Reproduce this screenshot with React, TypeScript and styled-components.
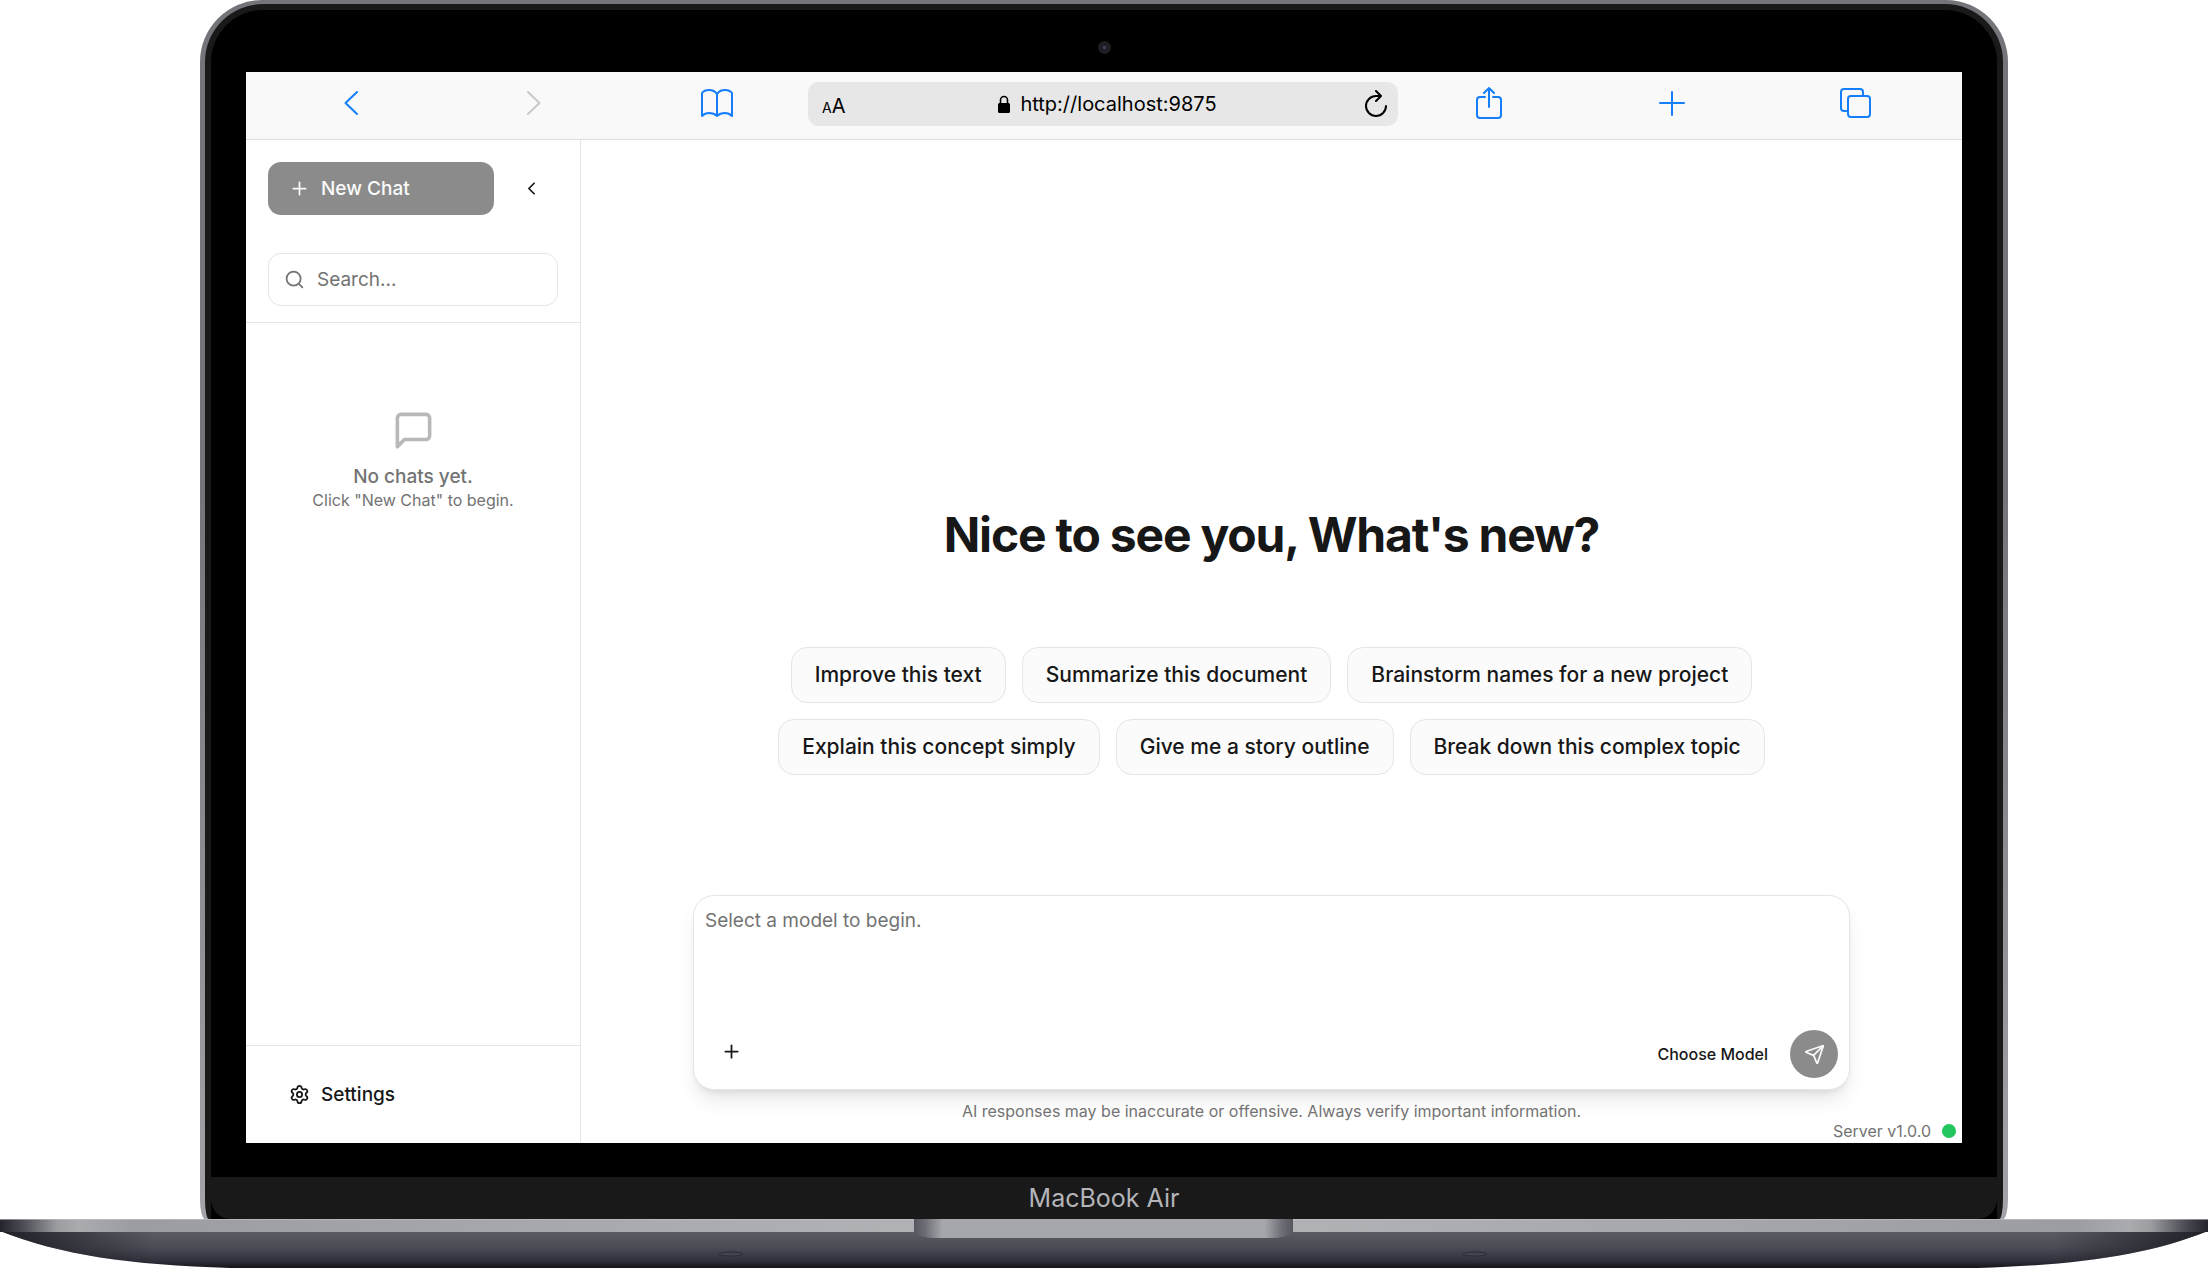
import React, { useState } from "react";
import styled, { createGlobalStyle } from "styled-components";
import { Plus, ChevronLeft, Search, Settings, Send } from "lucide-react";

const GlobalStyle = createGlobalStyle`
  *, *::before, *::after { box-sizing: border-box; }
  body {
    margin: 0;
    background: #fff;
    color: #171717;
    font-family: Inter, "Liberation Sans", sans-serif;
    -webkit-font-smoothing: antialiased;
  }
  button, input, textarea { font: inherit; color: inherit; }
  button { cursor: pointer; }
`;

const colors = {
  line: "#e5e5e5",
  muted: "#737373",
  ink: "#171717",
  disabled: "#8b8b8b",
  link: "#147efb",
};

/* ---------- Laptop ---------- */

const Laptop = styled.div`
  display: flex;
  flex-direction: column;
  min-height: 100vh;
`;

const Lid = styled.div`
  flex: 1;
  display: flex;
  margin: 0 200px;
  padding: 4px 5px 0;
  border-radius: 62px 62px 5px 5px / 62px 62px 20px 20px;
  background: linear-gradient(#74757b, #74757b 40%, #a3a4a9);
`;

const Bezel = styled.div`
  flex: 1;
  min-width: 0;
  display: flex;
  flex-direction: column;
  border: 6px solid #191919;
  border-bottom: 0;
  border-radius: 58px 58px 4px 4px / 58px 58px 20px 20px;
  background: #000;
`;

const CameraBar = styled.div`
  display: flex;
  align-items: center;
  justify-content: center;
  height: 62px;
  padding-top: 12px;
`;

const Camera = styled.span`
  width: 13px;
  height: 13px;
  border-radius: 50%;
  background: radial-gradient(circle, #3c3c50 0 1px, #15151c 3px, #222224 4px, #1c1c1e 6px);
`;

const Chin = styled.div`
  display: flex;
  align-items: center;
  justify-content: center;
  height: 42px;
  margin-top: 34px;
  border-radius: 0 0 20px 20px;
  background: #191919;
  color: #b4b4b9;
  font-size: 25px;
  line-height: 32px;
`;

const BaseDrawing = styled.svg`
  display: block;
  width: 100%;
  height: 49px;
`;

/* ---------- Browser ---------- */

const Screen = styled.div`
  position: relative;
  flex: 1;
  display: flex;
  flex-direction: column;
  margin: 0 35px;
  background: #fff;
`;

const BrowserBar = styled.nav`
  display: grid;
  grid-template-columns: repeat(3, 1fr) 35% repeat(3, 1fr);
  align-items: center;
  height: 68px;
  padding: 0 16px 6px 14px;
  border-bottom: 1px solid #dcdcdc;
  background: #f9f9f9;
`;

const BarButton = styled.button<{ $dim?: boolean }>`
  display: flex;
  align-items: center;
  justify-content: center;
  height: 44px;
  padding: 0;
  border: 0;
  background: none;
  color: ${(p) => (p.$dim ? "#c8c8c8" : colors.link)};
`;

const AddressBar = styled.div`
  display: grid;
  grid-template-columns: 1fr auto 1fr;
  align-items: center;
  height: 44px;
  margin-top: 3px;
  padding: 0 10px 0 14px;
  border-radius: 11px;
  background: #e7e7e7;
  color: #000;
`;

const TextSize = styled.button`
  justify-self: start;
  padding: 5px 0 0;
  border: 0;
  background: none;
  font-size: 20px;
  line-height: 24px;
  small { font-size: 14px; }
`;

const Address = styled.span`
  display: flex;
  align-items: center;
  gap: 9px;
  padding-left: 4px;
  font-size: 20px;
  line-height: 24px;
`;

const Reload = styled.button`
  display: flex;
  justify-self: end;
  padding: 0;
  border: 0;
  background: none;
`;

/* ---------- Sidebar ---------- */

const AppShell = styled.div`
  flex: 1;
  display: flex;
`;

const Sidebar = styled.aside`
  display: flex;
  flex-direction: column;
  width: 335px;
  border-right: 1px solid ${colors.line};
`;

const SidebarHead = styled.div`
  display: flex;
  flex-direction: column;
  gap: 38px;
  padding: 22px 22px 16px;
  border-bottom: 1px solid ${colors.line};
`;

const HeadRow = styled.div`
  display: flex;
  gap: 11px;
`;

const NavButton = styled.button<{ $filled?: boolean }>`
  flex: 1;
  display: flex;
  align-items: center;
  gap: 11px;
  height: 53px;
  padding: 0 21px;
  border: 0;
  border-radius: 13px;
  background: ${(p) => (p.$filled ? colors.disabled : "transparent")};
  color: ${(p) => (p.$filled ? "#fafafa" : colors.ink)};
  font-size: 19px;
  font-weight: 500;
  line-height: 28px;
`;

const IconButton = styled.button`
  display: flex;
  align-items: center;
  justify-content: center;
  width: 53px;
  height: 53px;
  padding: 0;
  border: 0;
  background: none;
  color: ${colors.ink};
`;

const SearchField = styled.label`
  display: flex;
  align-items: center;
  gap: 12px;
  height: 53px;
  padding: 0 15px;
  border: 1px solid ${colors.line};
  border-radius: 13px;
  color: ${colors.muted};
`;

const SearchInput = styled.input`
  flex: 1;
  min-width: 0;
  padding: 0;
  border: 0;
  outline: 0;
  background: none;
  font-size: 19px;
  line-height: 28px;
  &::placeholder { color: ${colors.muted}; opacity: 1; }
`;

const EmptyState = styled.div`
  flex: 1;
  display: flex;
  flex-direction: column;
  align-items: center;
  padding-top: 86px;
  color: ${colors.muted};
  text-align: center;
  svg { margin-bottom: 11px; opacity: 0.5; }
`;

const EmptyTitle = styled.p`
  margin: 0;
  font-size: 19px;
  font-weight: 500;
  line-height: 27px;
`;

const Note = styled.p`
  margin: 0;
  color: ${colors.muted};
  font-size: 16px;
  line-height: 21px;
  text-align: center;
`;

const SidebarFoot = styled.div`
  display: flex;
  padding: 22px;
  border-top: 1px solid ${colors.line};
`;

/* ---------- Conversation ---------- */

const Main = styled.main`
  flex: 1;
  min-width: 0;
  display: flex;
  flex-direction: column;
  align-items: center;
  padding: 0 21px 21px;
`;

const Hero = styled.section`
  flex: 1;
  display: flex;
  flex-direction: column;
  align-items: center;
  justify-content: flex-end;
  gap: 80px;
  padding-bottom: 120px;
`;

const Greeting = styled.h1`
  margin: 0;
  font-size: 48px;
  font-weight: 700;
  letter-spacing: -0.025em;
  line-height: 64px;
`;

const Suggestions = styled.div`
  display: flex;
  flex-wrap: wrap;
  justify-content: center;
  gap: 16px;
  max-width: 1024px;
`;

const Suggestion = styled.button`
  height: 56px;
  padding: 0 23px;
  border: 1px solid ${colors.line};
  border-radius: 16px;
  background: #fbfbfb;
  font-size: 21px;
  font-weight: 500;
  line-height: 32px;
`;

const Composer = styled.form`
  display: flex;
  flex-direction: column;
  width: 100%;
  max-width: 1157px;
  margin-bottom: 11px;
  padding: 11px;
  border: 1px solid ${colors.line};
  border-radius: 21px;
  background: #fff;
  box-shadow: 0 13px 20px -4px rgba(0, 0, 0, 0.1), 0 5px 8px -5px rgba(0, 0, 0, 0.12);
`;

const Prompt = styled.textarea`
  display: block;
  width: 100%;
  height: 118px;
  padding: 0;
  border: 0;
  outline: 0;
  resize: none;
  background: none;
  font-size: 19px;
  line-height: 28px;
  &::placeholder { color: ${colors.muted}; opacity: 1; }
`;

const ComposerRow = styled.div`
  display: flex;
  align-items: flex-end;
  justify-content: space-between;
`;

const ComposerActions = styled.div`
  display: flex;
  gap: 22px;
`;

const ModelButton = styled.button`
  padding: 0;
  border: 0;
  background: none;
  font-size: 16px;
  font-weight: 500;
  line-height: 21px;
`;

const SendButton = styled.button`
  display: flex;
  align-items: center;
  justify-content: center;
  width: 48px;
  height: 48px;
  padding: 0;
  border: 0;
  border-radius: 50%;
  background: ${colors.disabled};
  color: #fafafa;
`;

const ServerStatus = styled.div`
  position: absolute;
  right: 0;
  bottom: 0;
  display: flex;
  align-items: center;
  gap: 11px;
  padding: 1px 6px;
  background: #fff;
  color: ${colors.muted};
  font-size: 16px;
  line-height: 22px;
`;

const StatusDot = styled.span`
  width: 14px;
  height: 14px;
  border-radius: 50%;
  background: #22c55e;
`;

/* ---------- Drawings ---------- */

const line = {
  fill: "none",
  stroke: "currentColor",
  strokeWidth: 2,
  strokeLinecap: "round" as const,
  strokeLinejoin: "round" as const,
};

const BackIcon = () => (
  <svg width="16" height="26" viewBox="0 0 16 26" {...line}><path d="M14 2 2.500 13 14 24" /></svg>
);
const ForwardIcon = () => (
  <svg width="16" height="26" viewBox="0 0 16 26" {...line}><path d="M2 2 13.500 13 2 24" /></svg>
);
const BookIcon = () => (
  <svg width="34" height="30" viewBox="0 0 34 30" {...line}>
    <path d="M17 6C15 3 12 2 9 2S3.500 3 2 5v23c2-2 4-3 7-3s6 1 8 3c2-2 5-3 8-3s5 1 7 3V5c-1.500-2-4-3-7-3s-6 1-8 4zM17 6v22" />
  </svg>
);
const ShareIcon = () => (
  <svg width="28" height="34" viewBox="0 0 28 34" {...line}>
    <path d="M10 11H5a3 3 0 0 0-3 3v15a3 3 0 0 0 3 3h18a3 3 0 0 0 3-3V14a3 3 0 0 0-3-3h-5M14 21V2M9 7l5-5 5 5" />
  </svg>
);
const NewTabIcon = () => (
  <svg width="26" height="26" viewBox="0 0 26 26" {...line}><path d="M13 2v23M1 13h24" /></svg>
);
const TabsIcon = () => (
  <svg width="32" height="32" viewBox="0 0 32 32" {...line}>
    <path d="M8 24H5a3 3 0 0 1-3-3V5a3 3 0 0 1 3-3h16a3 3 0 0 1 3 3v3" />
    <rect x="9" y="9" width="22" height="21" rx="3" />
  </svg>
);
const LockIcon = () => (
  <svg width="14" height="18" viewBox="0 0 14 18">
    <rect x="1" y="8" width="12" height="10" rx="1.500" />
    <path d="M3.500 9V5a3.500 3.500 0 0 1 7 0v4" fill="none" stroke="currentColor" strokeWidth="1.600" />
  </svg>
);
const ReloadIcon = () => (
  <svg width="24" height="28" viewBox="0 0 24 28" {...line}>
    <path d="M22 16a10 10 0 1 1-10-10h4M12 1l5 5-5 5" />
  </svg>
);
const ChatIcon = () => (
  <svg width="43" height="43" viewBox="0 0 24 24" {...line}>
    <path d="M21 15a2 2 0 0 1-2 2H7l-4 4V5a2 2 0 0 1 2-2h14a2 2 0 0 1 2 2z" />
  </svg>
);

const LaptopBase = () => (
  <BaseDrawing viewBox="0 0 2208 49" preserveAspectRatio="none" aria-hidden="true">
    <defs>
      <linearGradient id="edge" x1="0" x2="1" y1="0" y2="0">
        <stop offset="0" stopColor="#23242c" />
        <stop offset="0.010" stopColor="#4a4b52" />
        <stop offset="0.026" stopColor="#9c9da1" />
        <stop offset="0.036" stopColor="#aaabaf" />
        <stop offset="0.060" stopColor="#9c9da2" />
        <stop offset="0.400" stopColor="#b0b1b5" />
        <stop offset="0.600" stopColor="#b0b1b5" />
        <stop offset="0.940" stopColor="#9c9da2" />
        <stop offset="0.964" stopColor="#aaabaf" />
        <stop offset="0.974" stopColor="#9c9da1" />
        <stop offset="0.990" stopColor="#4a4b52" />
        <stop offset="1" stopColor="#23242c" />
      </linearGradient>
      <linearGradient id="body" x1="0" x2="0" y1="0" y2="1">
        <stop offset="0" stopColor="#5c5d64" />
        <stop offset="0.450" stopColor="#4a4b54" />
        <stop offset="0.800" stopColor="#30313b" />
        <stop offset="1" stopColor="#14141c" />
      </linearGradient>
      <linearGradient id="bodySides" x1="0" x2="1" y1="0" y2="0">
        <stop offset="0" stopColor="#181920" stopOpacity="0.900" />
        <stop offset="0.070" stopColor="#181920" stopOpacity="0" />
        <stop offset="0.930" stopColor="#181920" stopOpacity="0" />
        <stop offset="1" stopColor="#181920" stopOpacity="0.900" />
      </linearGradient>
      <linearGradient id="notch" x1="0" x2="1" y1="0" y2="0">
        <stop offset="0" stopColor="#55565e" />
        <stop offset="0.030" stopColor="#6e6f76" />
        <stop offset="0.075" stopColor="#a6a7ac" />
        <stop offset="0.925" stopColor="#a6a7ac" />
        <stop offset="0.970" stopColor="#6e6f76" />
        <stop offset="1" stopColor="#55565e" />
      </linearGradient>
    </defs>
    <path d="M0 12C60 36 130 46 230 49H1978C2078 46 2148 36 2208 12Z" fill="url(#body)" />
    <path d="M0 12C60 36 130 46 230 49H1978C2078 46 2148 36 2208 12Z" fill="url(#bodySides)" />
    <rect width="2208" height="13" fill="url(#edge)" />
    <rect width="2208" height="1" fill="#c4c5c9" opacity="0.600" />
    <path d="M914 0H1293V13Q1286 19 1272 19H935Q921 19 914 13Z" fill="url(#notch)" />
    <g fill="#42434c" stroke="#2b2c35">
      <ellipse cx="731" cy="35" rx="12" ry="2" />
      <ellipse cx="1475" cy="35" rx="12" ry="2" />
    </g>
  </BaseDrawing>
);

const suggestions = [
  "Improve this text",
  "Summarize this document",
  "Brainstorm names for a new project",
  "Explain this concept simply",
  "Give me a story outline",
  "Break down this complex topic",
];

export default function App() {
  const [prompt, setPrompt] = useState("");

  return (
    <>
      <GlobalStyle />
      <Laptop>
        <Lid>
          <Bezel>
            <CameraBar><Camera /></CameraBar>
            <Screen>
              <BrowserBar aria-label="Browser">
                <BarButton aria-label="Back"><BackIcon /></BarButton>
                <BarButton aria-label="Forward" $dim><ForwardIcon /></BarButton>
                <BarButton aria-label="Bookmarks"><BookIcon /></BarButton>
                <AddressBar>
                  <TextSize aria-label="Text size"><small>A</small>A</TextSize>
                  <Address><LockIcon />http://localhost:9875</Address>
                  <Reload aria-label="Reload"><ReloadIcon /></Reload>
                </AddressBar>
                <BarButton aria-label="Share"><ShareIcon /></BarButton>
                <BarButton aria-label="New tab"><NewTabIcon /></BarButton>
                <BarButton aria-label="Tabs"><TabsIcon /></BarButton>
              </BrowserBar>
              <AppShell>
                <Sidebar>
                  <SidebarHead>
                    <HeadRow>
                      <NavButton $filled><Plus size={21} />New Chat</NavButton>
                      <IconButton aria-label="Collapse sidebar"><ChevronLeft size={21} /></IconButton>
                    </HeadRow>
                    <SearchField>
                      <Search size={21} />
                      <SearchInput type="search" aria-label="Search chats" placeholder="Search..." />
                    </SearchField>
                  </SidebarHead>
                  <EmptyState>
                    <ChatIcon />
                    <EmptyTitle>No chats yet.</EmptyTitle>
                    <Note>Click "New Chat" to begin.</Note>
                  </EmptyState>
                  <SidebarFoot>
                    <NavButton><Settings size={21} />Settings</NavButton>
                  </SidebarFoot>
                </Sidebar>
                <Main>
                  <Hero>
                    <Greeting>Nice to see you, What's new?</Greeting>
                    <Suggestions>
                      {suggestions.map((text) => (
                        <Suggestion key={text} onClick={() => setPrompt(text)}>{text}</Suggestion>
                      ))}
                    </Suggestions>
                  </Hero>
                  <Composer onSubmit={(e) => e.preventDefault()}>
                    <Prompt
                      aria-label="Message"
                      placeholder="Select a model to begin."
                      value={prompt}
                      onChange={(e) => setPrompt(e.target.value)}
                    />
                    <ComposerRow>
                      <IconButton type="button" aria-label="Add attachment"><Plus size={21} /></IconButton>
                      <ComposerActions>
                        <ModelButton type="button">Choose Model</ModelButton>
                        <SendButton aria-label="Send"><Send size={21} /></SendButton>
                      </ComposerActions>
                    </ComposerRow>
                  </Composer>
                  <Note>AI responses may be inaccurate or offensive. Always verify important information.</Note>
                </Main>
              </AppShell>
              <ServerStatus>Server v1.0.0<StatusDot /></ServerStatus>
            </Screen>
            <Chin>MacBook Air</Chin>
          </Bezel>
        </Lid>
        <LaptopBase />
      </Laptop>
    </>
  );
}
